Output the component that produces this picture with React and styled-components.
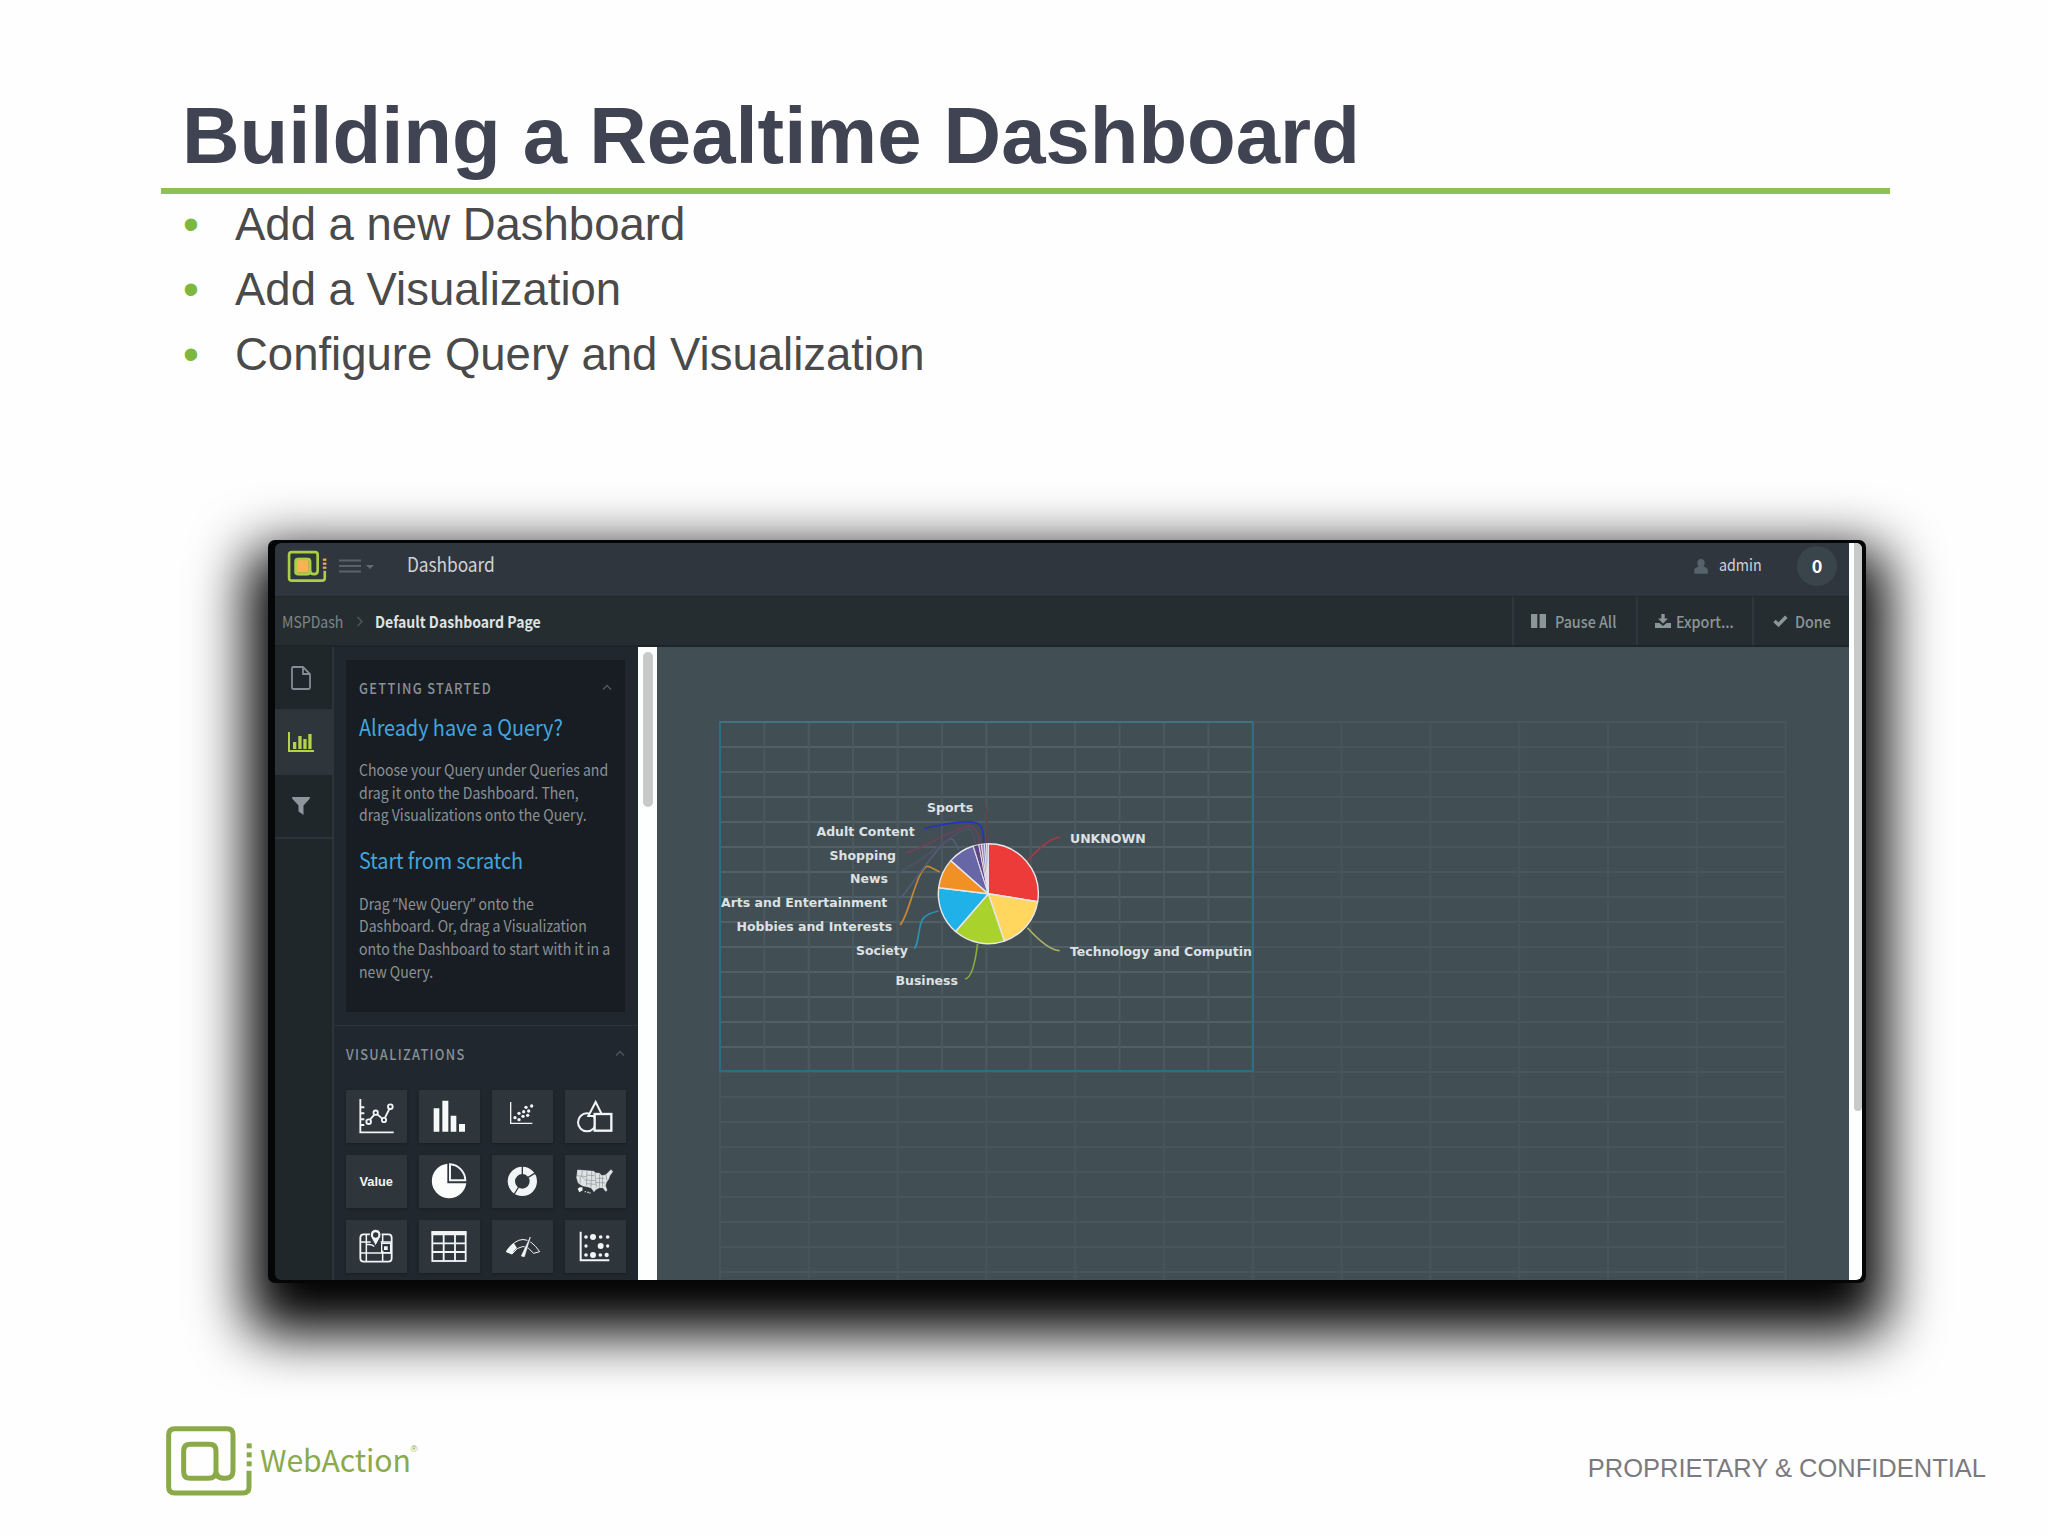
import styled, { createGlobalStyle, css } from "styled-components";

const GlobalStyle = createGlobalStyle`
  * {
    box-sizing: border-box;
  }
  body {
    margin: 0;
    background-color: #fefefe;
    font-family: "Liberation Sans", Arial, sans-serif;
  }
`;

const uiFont = `"Noto Sans CJK SC", "Open Sans", sans-serif`;

// the UI face is set a bit narrower than its normal width
const narrow = css`
  white-space: nowrap;
  transform: scaleX(0.89);
  transform-origin: left center;
`;

/* ---------- slide ---------- */

const Slide = styled.main`
  width: 2048px;
  height: 1536px;
  display: flex;
  flex-direction: column;
  overflow: hidden;
`;

const Title = styled.h1`
  height: 188px;
  margin: 0;
  padding: 90px 0 0 182px;
  font-size: 79.7px;
  line-height: 92px;
  font-weight: bold;
  color: #404352;
  white-space: nowrap;
`;

const Rule = styled.div`
  width: 1729px;
  height: 6px;
  margin: 0 0 -2px 161px;
  background-color: #8ec056;
`;

const Bullets = styled.ul`
  list-style: none;
  margin: 0;
  padding: 0 0 0 183px;
  height: 348px;
`;

const Bullet = styled.li`
  display: flex;
  height: 65px;
  line-height: 65px;
  font-size: 45.5px;
  color: #4a4a4b;
  white-space: nowrap;

  &::before {
    content: "•";
    width: 52px;
    color: #7cb83e;
  }
`;

const Footer = styled.footer`
  display: flex;
  justify-content: space-between;
  padding: 141px 62px 0 164px;
`;

const Brand = styled.div`
  display: flex;
`;

const BrandName = styled.span`
  display: flex;
  margin: 13px 0 0 6px;
  font-family: ${uiFont};
  font-size: 30.2px;
  line-height: 44px;
  letter-spacing: -0.1px;
  color: #8aaa4b;

  sup {
    font-family: "Liberation Sans", Arial, sans-serif;
    font-size: 9px;
    line-height: 24px;
  }
`;

const Notice = styled.span`
  margin-top: 29px;
  font-size: 25.5px;
  line-height: 30px;
  color: #7b7a80;
`;

/* ---------- app window ---------- */

const Window = styled.section`
  width: 1598px;
  height: 743px;
  margin-left: 268px;
  border: solid #050607;
  border-width: 3px 4px 3px 7px;
  border-radius: 7px;
  background-color: #050607;
  box-shadow: 0 30px 56px 21px #000;
`;

const Screen = styled.div`
  display: flex;
  height: 737px;
  border-radius: 6px;
  overflow: hidden;
  font-family: ${uiFont};
`;

const AppColumn = styled.div`
  width: 1574px;
  display: flex;
  flex-direction: column;
`;

const Scrollbar = styled.div`
  flex: none;
  width: ${(props) => props.width}px;
  padding: ${(props) => props.inset};
  background-color: #fdfefe;
`;

const Thumb = styled.div`
  height: ${(props) => props.height}px;
  border-radius: ${(props) => props.radius};
  background-color: #c8caca;
`;

const Header = styled.header`
  display: flex;
  align-items: center;
  height: 53px;
  padding: 0 12px 7px 12px;
  background-color: #2f363d;
`;

const PageName = styled.span`
  ${narrow}
  width: 90px;
  margin: -4px auto 0 32px;
  font-size: 19.5px;
  line-height: 28px;
  letter-spacing: -0.1px;
  color: #d0d3d4;
`;

const UserName = styled.span`
  ${narrow}
  width: 42px;
  margin: -5px 36px 0 11px;
  font-size: 16px;
  line-height: 24px;
  color: #cfd3d5;
`;

const Count = styled.span`
  width: 40px;
  height: 40px;
  border-radius: 50%;
  background-color: #39454b;
  color: #fff;
  font-size: 18px;
  line-height: 38px;
  font-weight: bold;
  text-align: center;
`;

const Toolbar = styled.nav`
  display: flex;
  align-items: center;
  height: 51px;
  padding-left: 7px;
  background-color: #262d30;
  border-top: 1px solid #22292c;
  border-bottom: 2px solid #1e2528;
`;

const Crumb = styled.span`
  ${narrow}
  width: ${(props) => props.width}px;
  font-size: 15.8px;
  font-weight: ${(props) => (props.current ? "bold" : "normal")};
  color: ${(props) => (props.current ? "#dfe2e2" : "#7d8687")};
`;

const Actions = styled.div`
  display: flex;
  height: 100%;
  margin-left: auto;
`;

const Action = styled.button`
  display: flex;
  align-items: center;
  gap: ${(props) => props.gap}px;
  width: ${(props) => props.width}px;
  padding: 0 0 0 ${(props) => props.indent}px;
  border: none;
  border-left: 2px solid #2f383d;
  background: none;
  font-family: inherit;
  font-size: 16.1px;
  font-weight: 500;
  color: #8b9698;

  svg {
    flex: none;
  }
`;

const ActionLabel = styled.span`
  ${narrow}
`;

const Body = styled.div`
  display: flex;
  flex: 1;
  min-height: 0;
`;

const Rail = styled.div`
  width: 59px;
  background-color: #1f272a;
  border-right: 2px solid #2b353a;
`;

const RailItem = styled.div`
  display: flex;
  align-items: center;
  justify-content: center;
  height: 64px;
  padding: 0 6px 0 0;
  background-color: ${(props) => (props.active ? "#2e363c" : "transparent")};
  border-bottom: 2px solid #2a3439;
`;

const Sidebar = styled.aside`
  width: 304px;
  background-color: #20272e;
  overflow: hidden;
`;

const HelpCard = styled.div`
  width: 279px;
  height: 352px;
  margin: 13px 0 13px 12px;
  padding: 15px 13px 0 13px;
  background-color: #181d24;
`;

const SectionHead = styled.div`
  display: flex;
  align-items: center;
  justify-content: space-between;
  height: 24px;
`;

const SectionTitle = styled.h3`
  ${narrow}
  margin: 0;
  font-size: 14.4px;
  font-weight: 500;
  letter-spacing: 1.5px;
  color: #899196;
`;

const HelpTitle = styled.h2`
  ${narrow}
  margin: ${(props) => props.top}px 0 0;
  font-size: 22.4px;
  line-height: 30px;
  font-weight: normal;
  letter-spacing: -0.08px;
  color: #42a6de;
`;

const HelpText = styled.p`
  ${narrow}
  margin: ${(props) => props.top}px 0 0;
  font-size: 15.8px;
  line-height: 22.6px;
  color: #8b9193;
`;

const Quote = styled.span`
  font-family: "Noto Sans", sans-serif;
  line-height: 1;
`;

const Visualizations = styled.div`
  padding: 15px 13px 0 12px;
  border-top: 1px solid #2c353a;
`;

const TileGrid = styled.div`
  display: grid;
  grid-template-columns: repeat(4, 60.5px);
  grid-auto-rows: 52.5px;
  gap: 12.5px;
  margin-top: 25px;
`;

const Tile = styled.div`
  background-color: #2e363c;
  box-shadow: 0 1px 2px #191f24;
  font-family: "Liberation Sans", Arial, sans-serif;
  font-size: 12.8px;
  line-height: 53px;
  font-weight: bold;
  text-align: center;
  color: #f2f4f5;

  svg {
    display: block;
  }
`;

/* ---------- canvas ---------- */

const Canvas = styled.div`
  flex: 1;
  padding: 74px 0 0 62px;
  background-color: #414e54;
  overflow: hidden;
`;

const Grid = styled.div`
  width: 1068px;
  height: 600px;
  background-image: linear-gradient(to right, #47555a 2px, transparent 2px),
    linear-gradient(#48565b 2px, transparent 2px);
  background-size: 88.8px 25px;
`;

const Widget = styled.div`
  width: 534.5px;
  height: 351px;
  border: 2px solid #28708a;
  border-top-color: #45707f;
  background-image: linear-gradient(to right, #4b595f 2px, transparent 2px),
    linear-gradient(#506066 2px, transparent 2px);
  background-size: 44.4px 25px;
  background-position: -2px -2px;
  background-origin: padding-box;

  svg {
    display: block;
  }
`;

const ChartLabel = styled.text`
  font-family: "DejaVu Sans", Verdana, sans-serif;
  font-size: 12.5px;
  font-weight: bold;
  fill: #dde1e3;
`;

const slices = [
  { from: 0, to: 99.2, color: "#ec3b39" },
  { from: 99.2, to: 161.3, color: "#ffd75f" },
  { from: 161.3, to: 220.9, color: "#a9d22c" },
  { from: 220.9, to: 276.9, color: "#1fb1e8" },
  { from: 276.9, to: 311.4, color: "#f19023" },
  { from: 311.4, to: 342.5, color: "#6767a7" },
  { from: 342.5, to: 349, color: "#5c4687" },
  { from: 349, to: 352, color: "#97558b" },
  { from: 352, to: 355.5, color: "#8b8fc4" },
  { from: 355.5, to: 358, color: "#6878bd" },
  { from: 358, to: 360, color: "#a79dc0" },
];

const leaders = [
  { color: "#a13b43", d: "M1027.4 860.7C1037 850 1049 838 1059.6 837.3" },
  { color: "#aeb064", d: "M1027.4 927.7C1040 941.7 1050 950 1059.6 950.7" },
  { color: "#8bab3d", d: "M977.5 944C975.6 960 972 978 965 979" },
  { color: "#2c90b0", d: "M938.6 911C920 915 921 922 919 932C917 944 916 948 914 948.5" },
  { color: "#c88632", d: "M939.7 872L930 867Q925 864 920 875C912 892 907 918 900 925" },
  { color: "#565b78", d: "M959 850L954 841Q951 835 940.5 846.7C930 858 912 884 901 898" },
  { color: "#514f68", d: "M975.6 845.7Q974 830 968 829C950 832 925 862 897 873" },
  { color: "#73405a", d: "M980 844Q978 828 970 826C955 827 925 848 905 853" },
  { color: "#2632bd", d: "M983.8 844Q984 826 977 823C962 819 938 826 924 828.3" },
  { color: "#5e4248", d: "M986.7 843V816Q987 809 984 806" },
];

const labels = [
  { text: "Sports", x: 927, y: 812 },
  { text: "Adult Content", x: 816.5, y: 835.7 },
  { text: "Shopping", x: 829.5, y: 859.5 },
  { text: "News", x: 850, y: 883.2 },
  { text: "Arts and Entertainment", x: 721, y: 907 },
  { text: "Hobbies and Interests", x: 736.5, y: 931 },
  { text: "Society", x: 856, y: 955 },
  { text: "Business", x: 895.5, y: 984.7 },
  { text: "UNKNOWN", x: 1070, y: 843 },
  { text: "Technology and Computing", x: 1070, y: 956 },
];

const CX = 988.3;
const CY = 893.7;
const R = 50;

const point = (deg) => {
  const a = ((deg - 90) * Math.PI) / 180;
  return `${CX + R * Math.cos(a)} ${CY + R * Math.sin(a)}`;
};

const PieChart = () => (
  <svg width="531" height="347" viewBox="721 723 531 347">
    {leaders.map((l) => (
      <path key={l.d} d={l.d} fill="none" stroke={l.color} strokeWidth="1.7" />
    ))}
    {slices.map((s) => (
      <path
        key={s.from}
        d={`M${CX} ${CY}L${point(s.from)}A${R} ${R} 0 0 1 ${point(s.to)}Z`}
        fill={s.color}
        stroke="#e9e6ea"
        strokeWidth={s.from > 340 ? 0.9 : 1.4}
        strokeLinejoin="round"
      />
    ))}
    {labels.map((l) => (
      <ChartLabel key={l.text} x={l.x} y={l.y}>
        {l.text}
      </ChartLabel>
    ))}
  </svg>
);

/* ---------- icons ---------- */

const Logo = ({ width, color, dots, core }) => (
  <svg width={width} height={(width * 222) / 270} viewBox="72 72 270 222">
    {core && <rect x="122" y="124" width="112" height="118" rx="18" fill="#6fa044" />}
    {core && <rect x="138" y="140" width="80" height="84" rx="10" fill={core} />}
    <path
      d="M327 212V261Q327 279 309 279H104Q86 279 86 261V104Q86 86 104 86H262Q279 86 279 104V212Q279 235 255 235Q228 235 228 212V153Q228 133 208 133H151Q131 133 131 153V215Q131 235 151 235H205Q228 235 228 212"
      fill="none"
      stroke={color}
      strokeWidth={core ? 18 : 15}
    />
    <g fill={dots || color}>
      <rect x={core ? 314 : 320} y="130" width={core ? 24 : 15} height="15" />
      <rect x={core ? 314 : 320} y="157" width={core ? 24 : 15} height="15" />
      <rect x={core ? 314 : 320} y="184" width={core ? 24 : 15} height="15" />
    </g>
  </svg>
);

const MenuIcon = () => (
  <svg width="36" height="14" viewBox="0 0 36 14" style={{ marginLeft: 12 }}>
    <path d="M0 1.5H22M0 7H22M0 12.5H22" stroke="#59636a" strokeWidth="2.2" />
    <path d="M27 6H35L31 10Z" fill="#626b71" />
  </svg>
);

const UserIcon = () => (
  <svg width="14" height="15" viewBox="0 0 14 15">
    <path
      d="M7 0C9.5 0 10.800 2 10.700 4.300Q10.600 6.500 9.500 7.700Q13.800 8.500 13.800 11V14Q13.800 14.800 13 14.800H1Q.2 14.800 .2 14V11Q.2 8.500 4.500 7.700Q3.400 6.500 3.300 4.300C3.200 2 4.500 0 7 0Z"
      fill="#56636a"
    />
  </svg>
);

const Separator = () => (
  <svg width="31" height="12" viewBox="0 0 31 12">
    <path d="M13.5 2L18 6.5L13.5 11" fill="none" stroke="#4c5558" strokeWidth="1.5" />
  </svg>
);

const Caret = () => (
  <svg width="10" height="7" viewBox="0 0 10 7">
    <path d="M1 5.5L5 1.5L9 5.5" fill="none" stroke="#4e565d" strokeWidth="1.5" />
  </svg>
);

const PauseIcon = () => (
  <svg width="15" height="14" viewBox="0 0 15 14">
    <path d="M0 0H6.3V14H0ZM8.6 0H15V14H8.6Z" fill="#8b9698" />
  </svg>
);

const ExportIcon = () => (
  <svg width="16" height="15" viewBox="0 0 16 15">
    <path
      d="M6.3 0H9.7V4.5H13L8 9.5L3 4.5H6.3ZM0 9H4.3L8 12L11.700 9H16V14H0Z"
      fill="#8b9698"
    />
  </svg>
);

const CheckIcon = () => (
  <svg width="15" height="12" viewBox="0 0 15 12">
    <path d="M1.5 6L5.5 9.8L13.3 1.7" fill="none" stroke="#8b9698" strokeWidth="3.4" />
  </svg>
);

const FileIcon = () => (
  <svg width="20" height="24" viewBox="0 0 20 24">
    <path
      d="M2 1H12L19 8V21.5Q19 23 17.5 23H2.500Q1 23 1 21.500V2.500Q1 1 2 1ZM12 1V8H19"
      fill="none"
      stroke="#838d92"
      strokeWidth="1.8"
    />
  </svg>
);

const ChartIcon = () => (
  <svg width="26" height="20" viewBox="0 0 26 20">
    <path d="M1 0V19H26" fill="none" stroke="#b3d348" strokeWidth="2" />
    <path d="M5 10H8.3V17H5ZM10.3 4H13.6V17H10.3ZM15.3 7H18.6V17H15.3ZM20.3 2H23.6V17H20.3Z" fill="#b3d348" />
  </svg>
);

const FilterIcon = () => (
  <svg width="18" height="18" viewBox="0 0 18 18">
    <path d="M0 0H18L17.5 2L11.5 8.5V18L6.5 14.5V8.5L.5 2Z" fill="#8d979b" />
  </svg>
);

const TileIcon = ({ children }) => (
  <svg
    width="60.5"
    height="52.5"
    viewBox="0 0 181.5 157.5"
    fill="none"
    stroke="#f2f5f6"
    strokeWidth="5.5"
  >
    {children}
  </svg>
);

const dot = ([x, y, r]) => (
  <circle key={`${x}-${y}`} cx={x} cy={y} r={r} fill="#f2f5f6" stroke="none" />
);

const LineTile = () => (
  <TileIcon>
    <path d="M43 27V127H143" />
    <path d="M45 52H55M45 70H55M45 88H55M45 105H55" strokeWidth="6" />
    <path d="M72 89L85 74M94 73L109 86M117 83L130 57" />
    <circle cx="68" cy="95" r="7" />
    <circle cx="89" cy="68" r="6.5" />
    <circle cx="114" cy="90" r="6.5" />
    <circle cx="133" cy="50" r="7" />
  </TileIcon>
);

const BarTile = () => (
  <TileIcon>
    <path
      d="M44 55H61V125H44ZM70 32H88V125H70ZM95 77H112V125H95ZM120 102H138V125H120Z"
      fill="#f7f9f9"
      stroke="none"
    />
  </TileIcon>
);

const scatterDots = [
  [69, 83, 5], [81, 89, 5], [81, 70, 5], [93, 79, 5], [95, 65, 5], [107, 76, 5],
  [110, 63, 5], [102, 52, 5], [119, 48, 5],
];

const ScatterTile = () => (
  <TileIcon>
    <path d="M56 36V100H121" strokeWidth="4" />
    {scatterDots.map(dot)}
  </TileIcon>
);

const ShapesTile = () => (
  <TileIcon>
    <circle cx="66" cy="97" r="27" strokeWidth="6" />
    <path d="M92 36L113 78H70Z" fill="#2e363c" strokeWidth="6" />
    <rect x="89" y="72" width="50" height="50" fill="#2e363c" strokeWidth="7" />
  </TileIcon>
);

const PieTile = () => (
  <TileIcon>
    <path d="M85 26A52 52 0 1 0 142 85H85Z" fill="#fbfcfc" stroke="none" />
    <path d="M93 28A49 49 0 0 1 139 76H93Z" strokeWidth="6" />
  </TileIcon>
);

const DonutTile = () => (
  <TileIcon>
    <circle cx="91" cy="79" r="33" strokeWidth="22" />
    <path d="M91 59V32M107 68L133 52M80 96L65 120" stroke="#2e363c" strokeWidth="4" />
  </TileIcon>
);

const UsMapTile = () => (
  <TileIcon>
    <path
      d="M38 45L86 49L92 54L104 55L110 62L122 60L128 54L138 44L143 50L134 62L131 72L124 82L121 92L126 106L122 109L114 98L103 98L93 103L87 110L79 99L70 96L52 92L40 84L35 68Z"
      fill="#dfe3e4"
      stroke="#f2f5f6"
      strokeWidth="1.5"
    />
    <path
      d="M52 47L50 64L64 78M66 48L64 92M36 62L64 65M64 60L88 62M64 75L90 77M80 49V76M78 77V98M90 54L94 97M94 70L118 70M92 82L120 84M104 56L103 98M112 64L113 96M123 60L126 76M46 64L45 86M64 86L92 88"
      stroke="#8a9296"
      strokeWidth="2"
    />
    <path d="M38 101L44 97H52L53 106L43 112Z" fill="#f2f5f6" stroke="none" />
    {[[61, 110, 2], [69, 112, 2.5], [75, 114, 2]].map(dot)}
  </TileIcon>
);

const MapTile = () => (
  <TileIcon>
    <path d="M72 43H53Q43 43 43 53V114Q43 125 53 125H127Q137 125 137 114V53Q137 43 127 43H106" />
    <path d="M61 44V124M110 44V66M110 92V124M44 66H74M104 66H136M44 99H136M61 73Q80 73 84 80" strokeWidth="4.5" />
    <rect x="107" y="70" width="27" height="28" strokeWidth="4" />
    <rect x="114" y="79" width="11" height="11" fill="#f2f5f6" stroke="none" />
    <path d="M89 28A16 16 0 0 1 104 50L89 78L74 50A16 16 0 0 1 89 28Z" fill="#f2f5f6" stroke="#2e363c" strokeWidth="3" />
    <circle cx="89" cy="45" r="8" fill="#2e363c" stroke="none" />
  </TileIcon>
);

const TableTile = () => (
  <TileIcon>
    <rect x="40" y="36" width="100" height="87" />
    <path d="M38 40H142" strokeWidth="12" />
    <path d="M74 42V124M108 42V124M40 70H140M40 96H140" />
  </TileIcon>
);

const GaugeTile = () => (
  <TileIcon>
    <path d="M43 95Q93 22 143 95L125 100Q93 58 60 102Z" strokeWidth="3" />
    <path d="M42 95Q50 80 65 68L75 84Q66 91 60 103Z" fill="#f2f5f6" stroke="none" />
    <path d="M97 96L113 58" stroke="#2e363c" strokeWidth="9" />
    <path d="M88 108L115 51L97 110Z" fill="#f2f5f6" strokeWidth="2" />
  </TileIcon>
);

const bubbleDots = [
  [63, 51, 5.5], [84, 51, 9], [107, 51, 5.5], [128, 51, 5.5], [63, 78, 5], [107, 78, 9],
  [128, 78, 5], [63, 105, 5.5], [84, 105, 9], [106, 105, 5.5], [125, 105, 6.5],
];

const BubbleTile = () => (
  <TileIcon>
    <path d="M47 35V121H133" strokeWidth="6" />
    {bubbleDots.map(dot)}
  </TileIcon>
);

export default function App() {
  return (
    <Slide>
      <GlobalStyle />
      <Title>Building a Realtime Dashboard</Title>
      <Rule />
      <Bullets>
        <Bullet>Add a new Dashboard</Bullet>
        <Bullet>Add a Visualization</Bullet>
        <Bullet>Configure Query and Visualization</Bullet>
      </Bullets>

      <Window>
        <Screen>
          <AppColumn>
            <Header>
              <Logo width={40} color="#a9cf45" dots="#f0a94e" core="#fbb254" />
              <MenuIcon />
              <PageName>Dashboard</PageName>
              <UserIcon />
              <UserName>admin</UserName>
              <Count>0</Count>
            </Header>
            <Toolbar>
              <Crumb width={62}>MSPDash</Crumb>
              <Separator />
              <Crumb width={170} current>
                Default Dashboard Page
              </Crumb>
              <Actions>
                <Action width={124} indent={17} gap={9}>
                  <PauseIcon />
                  <ActionLabel>Pause All</ActionLabel>
                </Action>
                <Action width={116} indent={17} gap={5}>
                  <ExportIcon />
                  <ActionLabel>Export...</ActionLabel>
                </Action>
                <Action width={97} indent={19} gap={7}>
                  <CheckIcon />
                  <ActionLabel>Done</ActionLabel>
                </Action>
              </Actions>
            </Toolbar>
            <Body>
              <Rail>
                <RailItem>
                  <FileIcon />
                </RailItem>
                <RailItem active>
                  <ChartIcon />
                </RailItem>
                <RailItem>
                  <FilterIcon />
                </RailItem>
              </Rail>
              <Sidebar>
                <HelpCard>
                  <SectionHead>
                    <SectionTitle>GETTING STARTED</SectionTitle>
                    <Caret />
                  </SectionHead>
                  <HelpTitle top={12}>Already have a Query?</HelpTitle>
                  <HelpText top={18}>
                    Choose your Query under Queries and
                    <br />
                    drag it onto the Dashboard. Then,
                    <br />
                    drag Visualizations onto the Query.
                  </HelpText>
                  <HelpTitle top={17}>Start from scratch</HelpTitle>
                  <HelpText top={19}>
                    Drag <Quote>“</Quote>New Query<Quote>”</Quote> onto the
                    <br />
                    Dashboard. Or, drag a Visualization
                    <br />
                    onto the Dashboard to start with it in a
                    <br />
                    new Query.
                  </HelpText>
                </HelpCard>
                <Visualizations>
                  <SectionHead>
                    <SectionTitle>VISUALIZATIONS</SectionTitle>
                    <Caret />
                  </SectionHead>
                  <TileGrid>
                    <Tile><LineTile /></Tile>
                    <Tile><BarTile /></Tile>
                    <Tile><ScatterTile /></Tile>
                    <Tile><ShapesTile /></Tile>
                    <Tile>Value</Tile>
                    <Tile><PieTile /></Tile>
                    <Tile><DonutTile /></Tile>
                    <Tile><UsMapTile /></Tile>
                    <Tile><MapTile /></Tile>
                    <Tile><TableTile /></Tile>
                    <Tile><GaugeTile /></Tile>
                    <Tile><BubbleTile /></Tile>
                  </TileGrid>
                </Visualizations>
              </Sidebar>
              <Scrollbar width={19} inset="5px 4px 0 5px">
                <Thumb height={155} radius="5px" />
              </Scrollbar>
              <Canvas>
                <Grid>
                  <Widget>
                    <PieChart />
                  </Widget>
                </Grid>
              </Canvas>
            </Body>
          </AppColumn>
          <Scrollbar width={13} inset="0 0 0 5px">
            <Thumb height={568} radius="0 0 4px 4px" />
          </Scrollbar>
        </Screen>
      </Window>

      <Footer>
        <Brand>
          <Logo width={90} color="#8aaa48" />
          <BrandName>
            WebAction<sup>®</sup>
          </BrandName>
        </Brand>
        <Notice>PROPRIETARY &amp; CONFIDENTIAL</Notice>
      </Footer>
    </Slide>
  );
}
